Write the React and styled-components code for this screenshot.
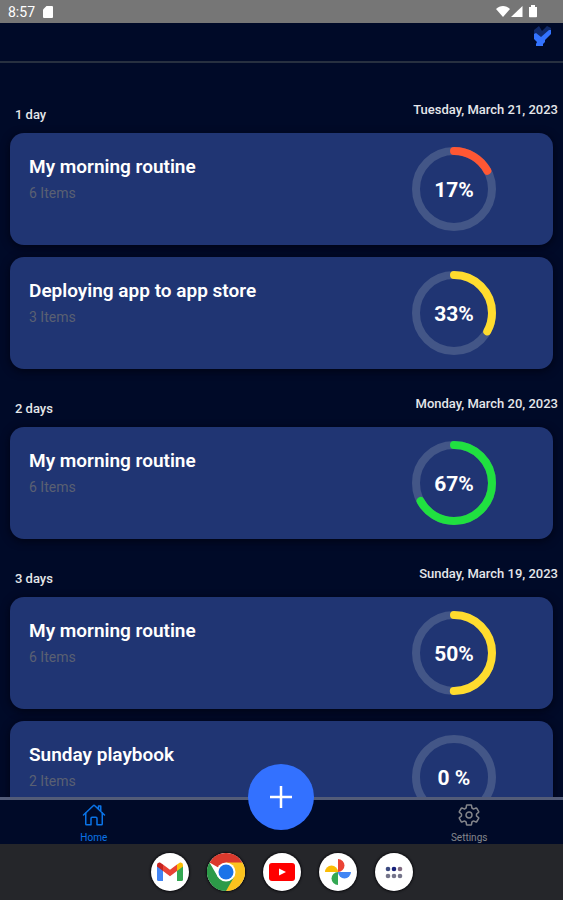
import styled, { createGlobalStyle } from "styled-components";
import { IoHomeOutline, IoSettingsOutline } from "react-icons/io5";

const days = [
    {
        label: "1 day",
        date: "Tuesday, March 21, 2023",
        lists: [
            { title: "My morning routine", items: 6, percent: 17 },
            { title: "Deploying app to app store", items: 3, percent: 33 },
        ],
    },
    {
        label: "2 days",
        date: "Monday, March 20, 2023",
        lists: [{ title: "My morning routine", items: 6, percent: 67 }],
    },
    {
        label: "3 days",
        date: "Sunday, March 19, 2023",
        lists: [
            { title: "My morning routine", items: 6, percent: 50 },
            { title: "Sunday playbook", items: 2, percent: 0 },
        ],
    },
];

function ringColor(percent) {
    if (percent < 30) return "#ff5733";
    if (percent < 60) return "#ffdc2e";
    return "#20e040";
}

function Ring({ percent }) {
    const length = 2 * Math.PI * 38;

    return (
        <RingBox>
            <svg width="84" height="84" viewBox="0 0 84 84" fill="none" strokeWidth="8" aria-hidden="true">
                <circle cx="42" cy="42" r="38" stroke="#435687" />
                {percent > 0 && (
                    <circle
                        cx="42"
                        cy="42"
                        r="38"
                        stroke={ringColor(percent)}
                        strokeLinecap="round"
                        strokeDasharray={`${(length * percent) / 100} ${length}`}
                        transform="rotate(-90 42 42)"
                    />
                )}
            </svg>
            <span>{percent === 0 ? "0 %" : `${percent}%`}</span>
        </RingBox>
    );
}

function StatusIcons() {
    return (
        <svg width="42" height="14" viewBox="0 0 42 14" fill="#fff" aria-hidden="true">
            <path d="M0 4C4 0 10 0 14 4L7 12Z" />
            <path d="M15 12L26.500 1V12Z" />
            <path d="M33 2h2V0h4v2h2v9.500q0 .8-.8.8h-6.400q-.8 0-.8-.8Z" />
        </svg>
    );
}

function SweepIcon() {
    return (
        <svg width="20" height="24" viewBox="0 0 20 24" aria-hidden="true">
            <path d="M2 7L7 3L10 8L15 3L19 5V10L10 16L2 12Z" fill="#2d66e8" opacity=".35" />
            <path d="M2 11L4 10L9 14L17 7H19V11L13 17V19L11 21V23H4V21L5 19L2 16Z" fill="#3373ff" />
        </svg>
    );
}

function GmailIcon() {
    return (
        <svg width="26" height="20" viewBox="0 0 26 20" aria-hidden="true">
            <path d="M0 3V17.500Q0 19 1.500 19H6V8Z" fill="#4285f4" />
            <path d="M20 8V19h4.500Q26 19 26 17.500V3Z" fill="#34a853" />
            <path d="M20 2.500V9l6-4.500V3Q26 0 23 .5Z" fill="#fbbc04" />
            <path d="M0 3V4.500L6 9V2.500L3 .5Q0 0 0 3Z" fill="#c5221f" />
            <path d="M6 2.500V9l7 5.300L20 9V2.500L13 7.800Z" fill="#ea4335" />
        </svg>
    );
}

function ChromeIcon() {
    return (
        <svg width="38" height="38" viewBox="0 0 38 38" aria-hidden="true">
            <path d="M19 19L2.540 9.500A19 19 0 0 1 35.460 9.500Z" fill="#db3a2d" />
            <path d="M19 19V9.500H35.460A19 19 0 0 1 19 38Z" fill="#fcc31e" />
            <path d="M2.540 9.500L10.770 23.750Q19 32 27.230 23.750L19 38A19 19 0 0 1 2.540 9.500Z" fill="#2c9a48" />
            <circle cx="19" cy="19" r="9.500" fill="#fff" />
            <circle cx="19" cy="19" r="7.500" fill="#1a73e8" />
        </svg>
    );
}

function YoutubeIcon() {
    return (
        <svg width="26" height="18" viewBox="0 0 26 18" aria-hidden="true">
            <rect width="26" height="18" rx="3" fill="#f00" />
            <path d="M10 5.500L17 9L10 12.500Z" fill="#fff" />
        </svg>
    );
}

function PhotosIcon() {
    return (
        <svg width="26" height="26" viewBox="0 0 26 26" aria-hidden="true">
            <path d="M13 0A6.500 6.500 0 0 1 13 13Z" fill="#ea4335" />
            <path d="M26 13A6.500 6.500 0 0 1 13 13Z" fill="#4285f4" />
            <path d="M13 26A6.500 6.500 0 0 1 13 13Z" fill="#34a853" />
            <path d="M0 13A6.500 6.500 0 0 1 13 13Z" fill="#fbbc04" />
        </svg>
    );
}

function AppsIcon() {
    return (
        <svg width="18" height="13" viewBox="0 0 18 13" aria-hidden="true">
            <circle cx="3" cy="3" r="2.300" fill="#3c4a80" />
            <circle cx="9" cy="3" r="2.300" fill="#17217a" />
            <circle cx="15" cy="3" r="2.300" fill="#806a80" />
            <circle cx="3" cy="10" r="2.300" fill="#74748a" />
            <circle cx="9" cy="10" r="2.300" fill="#74748a" />
            <circle cx="15" cy="10" r="2.300" fill="#74748a" />
        </svg>
    );
}

export default function App() {
    return (
        <>
            <GlobalStyle />
            <Screen>
                <StatusBar>
                    <span>8:57</span>
                    <svg width="10" height="12" viewBox="0 0 10 12" aria-hidden="true">
                        <path d="M3.500 0H9q1 0 1 1v10q0 1-1 1H1q-1 0-1-1V3.500Z" fill="#fff" />
                    </svg>
                    <StatusIcons />
                </StatusBar>
                <Header>
                    <HeaderButton aria-label="Clear lists">
                        <SweepIcon />
                    </HeaderButton>
                </Header>
                <Feed>
                    {days.map((day) => (
                        <section key={day.label}>
                            <DayHeader>
                                <h2>{day.label}</h2>
                                <time>{day.date}</time>
                            </DayHeader>
                            <Cards>
                                {day.lists.map((list) => (
                                    <Card key={list.title}>
                                        <div>
                                            <h3>{list.title}</h3>
                                            <p>{list.items} Items</p>
                                        </div>
                                        <Ring percent={list.percent} />
                                    </Card>
                                ))}
                            </Cards>
                        </section>
                    ))}
                </Feed>
                <TabBar>
                    <Tab href="#home" $active>
                        <IoHomeOutline size={24} />
                        Home
                    </Tab>
                    <AddButton aria-label="Add list">
                        <svg width="24" height="24" viewBox="0 0 24 24" aria-hidden="true">
                            <path d="M12 1V23M1 12H23" stroke="#fff" strokeWidth="2.500" />
                        </svg>
                    </AddButton>
                    <Tab href="#settings">
                        <IoSettingsOutline size={24} />
                        Settings
                    </Tab>
                </TabBar>
                <Dock>
                    <DockApp aria-label="Gmail"><GmailIcon /></DockApp>
                    <DockApp aria-label="Chrome"><ChromeIcon /></DockApp>
                    <DockApp aria-label="YouTube"><YoutubeIcon /></DockApp>
                    <DockApp aria-label="Photos"><PhotosIcon /></DockApp>
                    <DockApp aria-label="All apps"><AppsIcon /></DockApp>
                </Dock>
            </Screen>
        </>
    );
}

const GlobalStyle = createGlobalStyle`
    * {
        box-sizing: border-box;
        margin: 0;
        padding: 0;
    }
    body {
        font-family: 'Roboto', sans-serif;
        background: #000a28;
        color: #fff;
    }
    button {
        border: none;
        cursor: pointer;
    }
`;

const Screen = styled.div`
    height: 100vh;
    display: flex;
    flex-direction: column;
`;

const StatusBar = styled.div`
    flex: none;
    height: 23px;
    padding: 0 25px 0 8px;
    display: flex;
    align-items: center;
    gap: 8px;
    background: #767676;
    font-size: 14px;
    svg:last-child {
        margin-left: auto;
    }
`;

const Header = styled.header`
    flex: none;
    height: 40px;
    padding: 0 11px;
    display: flex;
    justify-content: flex-end;
    align-items: flex-start;
    border-bottom: 2px solid #273040;
`;

const HeaderButton = styled.button`
    display: flex;
    background: none;
`;

const Feed = styled.main`
    flex: 1;
    min-height: 0;
    padding-top: 12px;
    overflow-y: auto;
    scrollbar-width: none;
`;

const DayHeader = styled.div`
    height: 58px;
    padding: 0 5px 0 15px;
    display: flex;
    justify-content: space-between;
    align-items: center;
    font-size: 13px;
    line-height: 16px;
    font-weight: 500;
    color: #e4e6ea;
    h2 {
        padding-top: 22px;
        font-size: 13px;
        font-weight: 500;
    }
    time {
        padding-top: 12px;
    }
`;

const Cards = styled.div`
    padding: 0 10px;
    display: flex;
    flex-direction: column;
    gap: 12px;
`;

const Card = styled.article`
    height: 112px;
    padding: 14px 57px 14px 19px;
    display: flex;
    justify-content: space-between;
    align-items: flex-start;
    border-radius: 14px;
    background: #203573;
    box-shadow: 0 2px 8px #000414;
    h3 {
        padding-top: 8px;
        font-size: 19px;
        line-height: 24px;
        font-weight: 600;
    }
    p {
        padding-top: 6px;
        font-size: 14px;
        line-height: 16px;
        color: #5a6072;
    }
`;

const RingBox = styled.div`
    display: grid;
    place-items: center;
    svg, span {
        grid-area: 1 / 1;
    }
    span {
        padding-top: 2px;
        font-size: 21px;
        line-height: 24px;
        font-weight: 700;
    }
`;

const TabBar = styled.nav`
    flex: none;
    height: 47px;
    display: grid;
    grid-template-columns: 1fr 1fr 1fr;
    justify-items: center;
    border-top: 3px solid #535c78;
    background: #000a28;
`;

const Tab = styled.a`
    padding-top: 3px;
    display: flex;
    flex-direction: column;
    align-items: center;
    gap: 5px;
    font-size: 10px;
    line-height: 12px;
    text-decoration: none;
    color: ${(props) => (props.$active ? "#0a74e8" : "#85878c")};
`;

const AddButton = styled.button`
    width: 66px;
    height: 66px;
    margin-top: -36px;
    display: grid;
    place-items: center;
    border-radius: 50%;
    background: #3371ff;
    z-index: 1;
`;

const Dock = styled.footer`
    flex: none;
    height: 56px;
    display: flex;
    justify-content: center;
    align-items: center;
    gap: 18px;
    background: #25262a;
`;

const DockApp = styled.button`
    width: 38px;
    height: 38px;
    display: grid;
    place-items: center;
    border-radius: 50%;
    background: #fff;
    box-shadow: 0 0 2px 1px #0c0c10;
`;
